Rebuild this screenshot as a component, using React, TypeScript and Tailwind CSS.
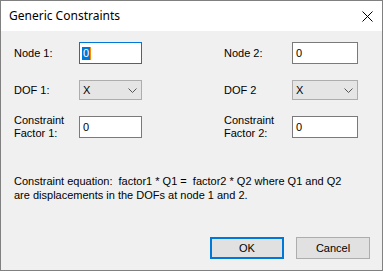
import React from "react";

const sans = { fontFamily: '"Liberation Sans", Arial, sans-serif' };

function Chevron() {
  return (
    <svg width="9" height="5" viewBox="0 0 9 5" className="block">
      <polyline points="0.5,0.5 4.5,4.5 8.5,0.5" fill="none" stroke="#555" strokeWidth="1" />
    </svg>
  );
}

function Field({ label, width, children }: { label: React.ReactNode; width: string; children: React.ReactNode }) {
  return (
    <div className="flex items-center">
      <div className={`${width} text-[11px] leading-[13px] text-black`}>{label}</div>
      {children}
    </div>
  );
}

function TextBox({ w, focused = false }: { w: string; focused?: boolean }) {
  return (
    <div
      className={`${w} h-[22px] bg-white flex items-center pl-[2px] text-[11px] text-black border ${
        focused ? "border-[#0078d7]" : "border-[#7a7a7a]"
      }`}
    >
      {focused ? (
        <span className="bg-[#0078d7] text-white px-[1px] leading-[13px] border-r border-[#ff8c00]">0</span>
      ) : (
        <span className="pl-[1px]">0</span>
      )}
    </div>
  );
}

function Combo({ w }: { w: string }) {
  return (
    <div className={`${w} h-[20px] bg-[#e5e5e5] border border-[#adadad] flex items-center justify-between pl-[3px] pr-[4px] text-[11px] text-black`}>
      <span>X</span>
      <Chevron />
    </div>
  );
}

export default function App() {
  return (
    <div className="w-[383px] h-[271px] border border-[#808080] bg-[#f0f0f0] flex flex-col" style={sans}>
      <div className="h-[30px] bg-white flex items-center justify-between pl-[8px] pr-[9px] shrink-0">
        <span className="text-[12px] text-black" style={{ fontFamily: '"Noto Sans", "Open Sans", sans-serif' }}>
          Generic Constraints
        </span>
        <svg width="11" height="11" viewBox="0 0 11 11">
          <line x1="0.5" y1="0.5" x2="10.5" y2="10.5" stroke="#000" strokeWidth="1" />
          <line x1="10.5" y1="0.5" x2="0.5" y2="10.5" stroke="#000" strokeWidth="1" />
        </svg>
      </div>
      <div className="flex-1 flex flex-col pl-[13px] pr-[12px] pt-[11px]">
        <div className="flex gap-[82px]">
          <div className="flex flex-col">
            <Field label="Node 1:" width="w-[65px]">
              <TextBox w="w-[63px]" focused />
            </Field>
            <div className="mt-[16px]">
              <Field label="DOF 1:" width="w-[65px]">
                <Combo w="w-[63px]" />
              </Field>
            </div>
            <div className="mt-[14px]">
              <Field label={<>Constraint<br />Factor 1:</>} width="w-[65px]">
                <TextBox w="w-[63px]" />
              </Field>
            </div>
          </div>
          <div className="flex flex-col">
            <Field label="Node 2:" width="w-[68px]">
              <TextBox w="w-[66px]" />
            </Field>
            <div className="mt-[16px]">
              <Field label="DOF 2" width="w-[68px]">
                <Combo w="w-[66px]" />
              </Field>
            </div>
            <div className="mt-[14px]">
              <Field label={<>Constraint<br />Factor 2:</>} width="w-[68px]">
                <TextBox w="w-[66px]" />
              </Field>
            </div>
          </div>
        </div>
        <p className="mt-[34px] text-[11px] leading-[14px] text-black whitespace-pre">
          {"Constraint equation:  factor1 * Q1 =  factor2 * Q2 where Q1 and Q2\nare displacements in the DOFs at node 1 and 2."}
        </p>
        <div className="mt-auto mb-[11px] flex justify-end gap-[12px]">
          <button className="w-[74px] h-[22px] bg-[#e1e1e1] border-2 border-[#0078d7] text-[11px] text-black">OK</button>
          <button className="w-[74px] h-[22px] bg-[#e1e1e1] border border-[#adadad] text-[11px] text-black">Cancel</button>
        </div>
      </div>
    </div>
  );
}
